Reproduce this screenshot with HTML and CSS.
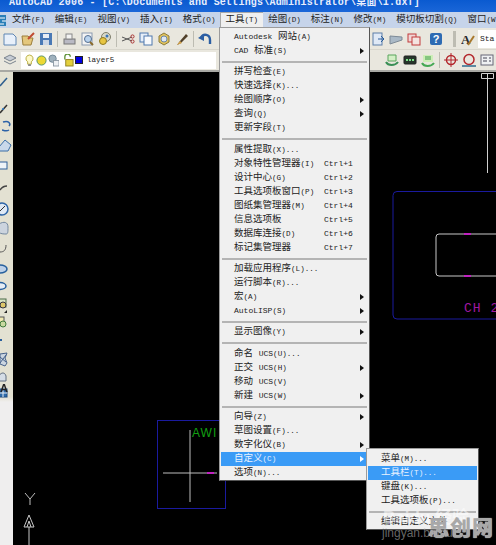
FILE: index.html
```html
<!DOCTYPE html>
<html lang="zh-CN">
<head>
    <meta charset="UTF-8">
    <title>AutoCAD 2006</title>
    <link rel="stylesheet" href="styles.css">
</head>
<body>
<div class="app">
    <div class="titlebar">AutoCAD 2006 - [C:\Documents and Settings\Administrator\桌面\1.dxf]</div>

    <div class="menubar">
        <svg class="app-icon" width="7" height="13" viewBox="0 0 7 13"><rect x="-4" y="1" width="10" height="11" fill="#2a7fb8"/><path d="M0 4h5M2 7h4M0 10h4" stroke="#fff"/></svg>
        <span class="menubar-item">文件<span class="key">(F)</span></span>
        <span class="menubar-item">编辑<span class="key">(E)</span></span>
        <span class="menubar-item">视图<span class="key">(V)</span></span>
        <span class="menubar-item">插入<span class="key">(I)</span></span>
        <span class="menubar-item">格式<span class="key">(O)</span></span>
        <span class="menubar-item active">工具<span class="key">(T)</span></span>
        <span class="menubar-item">绘图<span class="key">(D)</span></span>
        <span class="menubar-item">标注<span class="key">(N)</span></span>
        <span class="menubar-item">修改<span class="key">(M)</span></span>
        <span class="menubar-item">模切板切割<span class="key">(Q)</span></span>
        <span class="menubar-item">窗口<span class="key">(W)</span></span>
    </div>

    <div class="toolbar">
        <div class="tools">
            <svg class="tool" viewBox="0 0 14 14"><path d="M1 2h9l3 3v8H1z" fill="#e8f0fa" stroke="#5f86b3"/></svg>
            <svg class="tool" viewBox="0 0 14 14"><path d="M1 4h6l2 2h3l-2 7H2z" fill="#e4c77c" stroke="#9c7f3c"/><path d="M7 7l6-6" stroke="#c04a30" stroke-width="2"/></svg>
            <svg class="tool" viewBox="0 0 14 14"><rect x="1" y="1" width="12" height="12" fill="#4a79b5"/><rect x="4" y="2" width="6" height="4" fill="#e9eef5"/><rect x="4" y="8" width="6" height="5" fill="#cbd6e6"/></svg>
            <i class="tool-sep"></i>
            <svg class="tool" viewBox="0 0 14 14"><rect x="2" y="7" width="11" height="5" fill="#b9b9c4" stroke="#777"/><rect x="4" y="2" width="6" height="5" fill="#f2f2f2" stroke="#888"/></svg>
            <svg class="tool" viewBox="0 0 14 14"><rect x="2" y="1" width="10" height="12" fill="#f4f4f4" stroke="#8a9ab0"/><circle cx="8" cy="7" r="3.5" fill="#b9d3ee" stroke="#556f92"/><path d="M10 10l3 3" stroke="#8a6a2c" stroke-width="2"/></svg>
            <svg class="tool" viewBox="0 0 14 14"><circle cx="8" cy="5" r="4.5" fill="#d8d8c8" stroke="#7d7d6a"/><circle cx="5" cy="9" r="3.5" fill="#e7c542" stroke="#8f7a20"/><circle cx="9" cy="4" r="1.5" fill="#3a74b8"/></svg>
            <i class="tool-sep"></i>
            <svg class="tool" viewBox="0 0 14 14"><path d="M1 5l10 4M1 9l10-4" stroke="#555"/><circle cx="11.5" cy="4.5" r="1.6" fill="none" stroke="#a33"/><circle cx="11.5" cy="9.5" r="1.6" fill="none" stroke="#a33"/></svg>
            <svg class="tool" viewBox="0 0 14 14"><rect x="1" y="1" width="8" height="9" fill="#e6eef8" stroke="#4f79ae"/><rect x="5" y="4" width="8" height="9" fill="#f7f9fc" stroke="#4f79ae"/></svg>
            <svg class="tool" viewBox="0 0 14 14"><path d="M7 1l5 3v6l-5 3-5-3V4z" fill="#e2c25a" stroke="#8b7c3c"/><circle cx="7" cy="7" r="3" fill="#dfe8f2" stroke="#6b87a8"/></svg>
            <svg class="tool" viewBox="0 0 14 14"><path d="M2 13l3-4 6-7 2 2-7 7z" fill="#50402a"/><path d="M2 13l3-4 2 2z" fill="#d4a24a"/></svg>
            <i class="tool-sep"></i>
            <svg class="tool" viewBox="0 0 14 14"><path d="M3 6c2-5 9-4 9 2v4" fill="none" stroke="#2c5fa3" stroke-width="2.4"/><path d="M0 6l6-4v7z" fill="#2c5fa3"/></svg>
        </div>
        <div class="tools tools-right">
            <svg class="tool" viewBox="0 0 14 14"><rect x="2" y="1" width="9" height="12" fill="#dfe9f6" stroke="#5d7fa8"/><path d="M7 7h6M10 4l3 3-3 3" fill="none" stroke="#2a5d9c"/></svg>
            <svg class="tool" viewBox="0 0 14 14"><path d="M1 4l12 1v3L1 12z" fill="#aab9c6" stroke="#7d8a96"/></svg>
            <svg class="tool" viewBox="0 0 14 14"><rect x="1" y="2" width="8" height="8" fill="#f0d6d6" stroke="#c23a3a"/><rect x="5" y="5" width="8" height="8" fill="#f4e4e0" stroke="#c23a3a"/></svg>
            <i class="tool-gap"></i>
            <svg class="tool" viewBox="0 0 14 14"><rect x="1" y="1" width="12" height="12" rx="2" fill="#2e6bb3"/><text class="help-mark" x="7" y="11" text-anchor="middle">?</text></svg>
            <i class="tool-sep sep-wide"></i>
            <svg class="tool" viewBox="0 0 14 14"><text class="style-mark" x="0" y="12">A</text><path d="M7 13l6-9" stroke="#a8782c" stroke-width="2"/></svg>
            <div class="style-box">Sta</div>
        </div>
    </div>

    <div class="toolbar layerbar">
        <div class="tools">
            <svg class="tool" viewBox="0 0 14 14"><path d="M7 2l6 3-6 3-6-3z" fill="#c6ccd4" stroke="#7a838e"/><path d="M1 8l6 3 6-3" fill="none" stroke="#7a838e"/></svg>
        </div>
        <div class="layer-box">
            <svg class="layer-icon" viewBox="0 0 12 14"><path d="M6 1a4 4 0 0 1 2 7.400V11H4V8.400A4 4 0 0 1 6 1z" fill="#fdf9c8" stroke="#b5a83a"/><rect x="4.500" y="11" width="3" height="2" fill="#888"/></svg>
            <svg class="layer-icon" viewBox="0 0 12 14"><circle cx="6" cy="7" r="5" fill="#ecd834" stroke="#4f8f68"/></svg>
            <svg class="layer-icon" viewBox="0 0 12 14"><circle cx="5" cy="5" r="4" fill="#9fb1bd" stroke="#6f8494"/><rect x="6" y="7" width="6" height="6" fill="#eef1f4" stroke="#8b98a3"/></svg>
            <svg class="layer-icon lock" viewBox="0 0 12 14"><path d="M2 6V3a3 3 0 0 1 6 0" fill="none" stroke="#63953e" stroke-width="1.500"/><rect x="3" y="6" width="8" height="7" fill="#e3cf3c" stroke="#8f8020"/></svg>
            <i class="layer-color"></i>
            <span class="layer-name">layer5</span>
        </div>
        <div class="tools tools-right">
            <svg class="tool" viewBox="0 0 14 14"><path d="M1 9c2 4 9 4 12 0" fill="none" stroke="#3a8f56" stroke-width="2"/><path d="M3 2h8v6H3z" fill="#d4efc6" stroke="#58a55c"/></svg>
            <svg class="tool" viewBox="0 0 14 14"><rect x="1" y="3" width="12" height="8" rx="1" fill="#27352b" stroke="#222"/><path d="M3 7h8" stroke="#7fe08a" stroke-dasharray="2 1" stroke-width="2"/></svg>
            <svg class="tool" viewBox="0 0 14 14"><path d="M1 10c2 4 9 4 12 0" fill="none" stroke="#45a855" stroke-width="2"/><path d="M2 2h10v7H2z" fill="#cdeeb8"/><path d="M4 4h6M4 6h6" stroke="#3d9c48"/></svg>
            <i class="tool-sep"></i>
            <svg class="tool" viewBox="0 0 14 14"><circle cx="7" cy="7" r="4.500" fill="none" stroke="#b3272c" stroke-width="1.500"/><path d="M7 0v14M0 7h14" stroke="#b3272c"/></svg>
            <svg class="tool" viewBox="0 0 14 14"><circle cx="7" cy="6.500" r="5" fill="none" stroke="#b3272c" stroke-width="1.500"/><path d="M0 13h14" stroke="#2d6a8c" stroke-width="1.500"/></svg>
            <svg class="tool" viewBox="0 0 14 14"><rect x="1" y="2" width="12" height="10" fill="#eef0f2" stroke="#667"/><path d="M3 5h4M3 8h4M9 5h2M9 8h2" stroke="#445"/></svg>
        </div>
    </div>

    <div class="workspace">
        <div class="sidebar">
            <svg width="13" height="330" viewBox="0 0 13 330">
                <path d="M0 14l7-8" stroke="#2f5f8f" stroke-width="1.500"/>
                <path d="M0 41l7-8" stroke="#333" stroke-width="1.500"/><circle cx="3" cy="37" r="1" fill="#2f7fd0"/>
                <path d="M3 50c6-2 8 2 6 4M9 58c-3 2-6 0-7 0" fill="none" stroke="#2c62a8" stroke-width="1.500"/>
                <path d="M-1 75l6-7 6 5-3 6H-1z" fill="#c9d8ea" stroke="#3b6ea8"/>
                <rect x="-3" y="90" width="10" height="7" fill="#eef3f8" stroke="#2e5f99"/>
                <path d="M0 118c2-3 4-4 7-4" fill="none" stroke="#444" stroke-width="1.500"/>
                <circle cx="2" cy="137" r="6" fill="#dfe9f5" stroke="#2f66a8" stroke-width="1.500"/><path d="M0 139l5-5" stroke="#333"/>
                <path d="M-1 152c5-3 9-2 9 3s0 7-2 7-6 0-7-2z" fill="#ccd4de" stroke="#7388a0"/>
                <path d="M0 180c4 0 6-2 6-7" fill="none" stroke="#555"/>
                <ellipse cx="0" cy="197" rx="7" ry="4" fill="#bcd0e8" stroke="#27609e" stroke-width="1.500"/>
                <ellipse cx="0" cy="214" rx="6" ry="3.500" fill="#e5ecf4" stroke="#27609e" stroke-width="1.500"/>
                <rect x="-2" y="227" width="8" height="8" fill="#d9e4c4" stroke="#4a6a48"/><circle cx="3" cy="233" r="3" fill="#dcc66a" stroke="#334"/><path d="M4 241h3v-3z" fill="#222"/>
                <rect x="-2" y="245" width="6" height="6" fill="#f0e8b0" stroke="#555"/><circle cx="3" cy="252" r="3" fill="#c8d8a0" stroke="#3f7a3c"/>
                <rect x="-1" y="267" width="3" height="2" fill="#2a5f9c"/>
                <path d="M0 282l7-1-2 5 2 5-2 3-5-2zM0 285l6 5M6 283l-6 8" fill="#cbd5e0" stroke="#47628a"/>
                <path d="M-1 309v-5c2-4 6-4 7 0v5z" fill="#d5dde6" stroke="#606e80"/>
                <rect x="-1" y="317" width="8" height="8" fill="#2d6aa8" stroke="#1d4a80"/><path d="M-1 321h8M3 317v8" stroke="#e8eef5"/>
            </svg>
            <span class="side-a">A</span>
        </div>

        <div class="canvas">
            <svg class="drawing" width="483" height="473" viewBox="13 72 483 473">
                <rect x="157.500" y="420.500" width="68" height="88" fill="none" stroke="#1a1a9e"/>
                <path d="M190 430v72M163 473h54" stroke="#bdbdbd"/>
                <path d="M207 473h7" stroke="#c021c0" stroke-width="2"/>
                <text class="cad-awi" x="192" y="437">AWI</text>

                <path d="M481.500 73.500h12v5h-12zM487.500 73v100" fill="none" stroke="#d0d0d0"/>
                <path d="M496 191.500H397a4 4 0 0 0-4 4V315a4 4 0 0 0 4 4h99" fill="none" stroke="#1a1a9e"/>
                <path d="M496 234H439a3 3 0 0 0-3 3V273a3 3 0 0 0 3 3h57" fill="none" stroke="#c8c8c8"/>
                <path d="M464 234h7M464 276h7" stroke="#c021c0" stroke-width="2"/>
                <text class="cad-ch" x="464" y="312">CH 2</text>

                <path d="M25 493l5 6 5-6M30 499v6" fill="none" stroke="#bdbdbd"/>
                <path d="M29 515l-5 12h10z M29 521l-2 6M29 521l2 6M29 527v18" fill="none" stroke="#c8c8c8"/>
            </svg>
        </div>
    </div>

    <ul class="menu">
        <li class="item"><span><span class="en">Autodesk</span> 网站<span class="key">(A)</span></span></li>
        <li class="item sub"><span><span class="en">CAD</span> 标准<span class="key">(S)</span></span></li>
        <li class="sep"></li>
        <li class="item"><span>拼写检查<span class="key">(E)</span></span></li>
        <li class="item"><span>快速选择<span class="key">(K)...</span></span></li>
        <li class="item sub"><span>绘图顺序<span class="key">(O)</span></span></li>
        <li class="item sub"><span>查询<span class="key">(Q)</span></span></li>
        <li class="item"><span>更新字段<span class="key">(T)</span></span></li>
        <li class="sep sep-tall"></li>
        <li class="item"><span>属性提取<span class="key">(X)...</span></span></li>
        <li class="item"><span>对象特性管理器<span class="key">(I)</span></span><span class="shortcut">Ctrl+1</span></li>
        <li class="item"><span>设计中心<span class="key">(G)</span></span><span class="shortcut">Ctrl+2</span></li>
        <li class="item"><span>工具选项板窗口<span class="key">(P)</span></span><span class="shortcut">Ctrl+3</span></li>
        <li class="item"><span>图纸集管理器<span class="key">(M)</span></span><span class="shortcut">Ctrl+4</span></li>
        <li class="item"><span>信息选项板</span><span class="shortcut">Ctrl+5</span></li>
        <li class="item"><span>数据库连接<span class="key">(D)</span></span><span class="shortcut">Ctrl+6</span></li>
        <li class="item"><span>标记集管理器</span><span class="shortcut">Ctrl+7</span></li>
        <li class="sep"></li>
        <li class="item"><span>加载应用程序<span class="key">(L)...</span></span></li>
        <li class="item"><span>运行脚本<span class="key">(R)...</span></span></li>
        <li class="item sub"><span>宏<span class="key">(A)</span></span></li>
        <li class="item sub"><span><span class="en">AutoLISP</span><span class="key">(S)</span></span></li>
        <li class="sep"></li>
        <li class="item sub"><span>显示图像<span class="key">(Y)</span></span></li>
        <li class="sep sep-tall"></li>
        <li class="item"><span>命名 <span class="en">UCS</span><span class="key">(U)...</span></span></li>
        <li class="item sub"><span>正交 <span class="en">UCS</span><span class="key">(H)</span></span></li>
        <li class="item"><span>移动 <span class="en">UCS</span><span class="key">(V)</span></span></li>
        <li class="item sub"><span>新建 <span class="en">UCS</span><span class="key">(W)</span></span></li>
        <li class="sep"></li>
        <li class="item sub"><span>向导<span class="key">(Z)</span></span></li>
        <li class="item"><span>草图设置<span class="key">(F)...</span></span></li>
        <li class="item sub"><span>数字化仪<span class="key">(B)</span></span></li>
        <li class="item sub selected"><span>自定义<span class="key">(C)</span></span></li>
        <li class="item"><span>选项<span class="key">(N)...</span></span></li>
    </ul>

    <ul class="submenu">
        <li class="item"><span>菜单<span class="key">(M)...</span></span></li>
        <li class="item selected"><span>工具栏<span class="key">(T)...</span></span></li>
        <li class="item"><span>键盘<span class="key">(K)...</span></span></li>
        <li class="item"><span>工具选项板<span class="key">(P)...</span></span></li>
        <li class="sep"></li>
        <li class="item"><span>编辑自定义文件</span></li>
    </ul>

    <div class="mark-baidu">Baidu 经验</div>
    <div class="mark-url">jingyan.baidu</div>
    <div class="mark-site">思创网</div>
</div>
</body>
</html>
```

FILE: styles.css
```css
* {
    margin: 0;
    padding: 0;
    box-sizing: border-box;
}

body {
    width: 496px;
    height: 545px;
    overflow: hidden;
    background-color: #000;
}

.app {
    position: relative;
    width: 496px;
    height: 545px;
    display: flex;
    flex-direction: column;
    overflow: hidden;
    font-family: "Liberation Mono", "Noto Sans CJK SC", monospace;
    font-size: 9.5px;
    color: #222;
    filter: blur(0.45px);
}

.titlebar {
    height: 12px;
    padding-left: 9px;
    background: linear-gradient(#0a5ad0, #1a66d8);
    color: #e8eefc;
    font-size: 10px;
    font-weight: bold;
    letter-spacing: 0.2px;
    line-height: 6px;
    white-space: nowrap;
    overflow: hidden;
}

.menubar {
    height: 16px;
    display: flex;
    align-items: center;
    gap: 10px;
    background-color: #c6d4ea;
    white-space: nowrap;
    overflow: hidden;
}

.app-icon {
    flex: none;
    margin-right: -5px;
}

.menubar-item {
    line-height: 16px;
}

.menubar-item.active {
    margin: 0 -5px;
    padding: 0 5px;
    width: 43px;
    background-color: #efefef;
    box-shadow: inset 1px 1px 0 #a8a8a8;
}

.key {
    font-size: 7.6px;
}

.en {
    font-size: 8px;
}

.toolbar {
    height: 22px;
    display: flex;
    align-items: center;
    padding-left: 1px;
    background-color: #e9e7de;
    border-bottom: 1px solid #d8d6cc;
}

.layerbar {
    height: 22px;
    border-bottom: 2px solid #a9a9a4;
}

.tools {
    display: flex;
    align-items: center;
}

.tools-right {
    margin-left: auto;
}

.tool {
    width: 14px;
    height: 14px;
    margin: 0 2px;
    flex: none;
}

.tool-sep {
    width: 1px;
    height: 16px;
    margin: 0 2px;
    background-color: #bdbcb2;
}

.sep-wide {
    width: 3px;
    margin: 0 3px 0 8px;
}

.tool-gap {
    width: 4px;
}

.help-mark {
    font: bold 11px "Liberation Sans", sans-serif;
    fill: #fff;
}

.style-mark {
    font: bold 13px "Liberation Serif", serif;
    fill: #2a2a2a;
}

.style-box {
    width: 18px;
    height: 18px;
    margin-left: 1px;
    padding-left: 2px;
    background-color: #fff;
    font-size: 8px;
    line-height: 18px;
    overflow: hidden;
}

.layer-box {
    width: 195px;
    height: 17px;
    margin-left: 2px;
    padding-left: 3px;
    display: flex;
    align-items: center;
    gap: 1px;
    background-color: #fff;
}

.layer-icon {
    width: 11px;
    height: 13px;
    flex: none;
}

.lock {
    margin-left: 3px;
}

.layer-color {
    width: 8px;
    height: 8px;
    margin: 0 2px 0 0;
    background-color: #0000e0;
    border: 1px solid #222;
}

.layer-name {
    margin-left: 1px;
    font-size: 7.6px;
}

.workspace {
    flex: 1;
    display: flex;
    min-height: 0;
}

.sidebar {
    position: relative;
    width: 13px;
    flex: none;
    background: linear-gradient(#e3e1d2 0, #e3e1d2 325px, #efeeee 330px);
    overflow: hidden;
}

.side-a {
    position: absolute;
    top: 310px;
    left: 0;
    font: bold 11px "Liberation Sans", sans-serif;
}

.canvas {
    flex: 1;
    background-color: #000;
}

.drawing {
    display: block;
}

.cad-awi {
    font: 12px "Liberation Sans", sans-serif;
    letter-spacing: 1px;
    fill: #12a012;
}

.cad-ch {
    font: 13px "Liberation Mono", monospace;
    letter-spacing: 1px;
    fill: #a018a0;
}

.menu,
.submenu {
    position: absolute;
    list-style: none;
    background-color: #f0f0f0;
    border: 1px solid #9b9b9b;
    border-right-color: #555;
    border-bottom-color: #555;
    padding: 1px;
}

.menu {
    left: 219px;
    top: 27px;
    width: 151px;
    height: 454px;
    padding-top: 2px;
}

.submenu {
    left: 366px;
    top: 448px;
    width: 113px;
    height: 82px;
    padding-top: 3px;
}

.item {
    position: relative;
    height: 14px;
    line-height: 14px;
    padding-left: 13px;
    display: grid;
    grid-template-columns: 90px 1fr;
    white-space: nowrap;
}

.submenu .item {
    padding-left: 13px;
    grid-template-columns: 1fr;
}

.shortcut {
    font-size: 8px;
}

.item.sub::after {
    content: "";
    position: absolute;
    right: 4px;
    top: 4px;
    border-left: 4px solid #111;
    border-top: 3px solid transparent;
    border-bottom: 3px solid transparent;
}

.item.selected {
    background-color: #3a9bf6;
    color: #e9f2ff;
}

.item.selected::after {
    border-left-color: #fff;
}

.sep {
    height: 2px;
    margin: 3px 1px 2px;
    background-color: #b4b4b4;
}

.sep-tall {
    margin-bottom: 3px;
}

.mark-baidu,
.mark-url,
.mark-site {
    position: absolute;
    white-space: nowrap;
}

.mark-baidu {
    left: 383px;
    top: 503px;
    font: bold 17px "Liberation Sans", "Noto Sans CJK SC", sans-serif;
    color: rgba(255, 255, 255, 0.55);
}

.mark-url {
    left: 382px;
    top: 526px;
    font: 12px "Liberation Sans", sans-serif;
    color: rgba(190, 190, 190, 0.55);
}

.mark-site {
    left: 428px;
    top: 516px;
    font: 900 21px/21px "Noto Sans CJK SC", sans-serif;
    letter-spacing: 1px;
    color: #a8a8a8;
    text-shadow: 0 0 1px #eee;
}
```
